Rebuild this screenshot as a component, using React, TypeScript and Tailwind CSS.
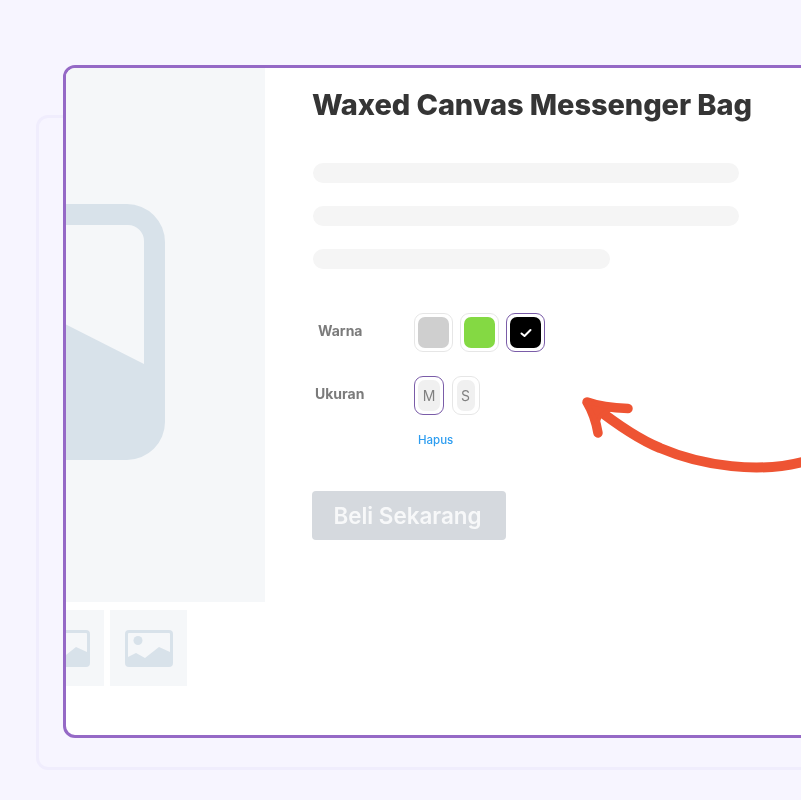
const colors = [
  { bg: 'bg-[#cfcfcf]', selected: false },
  { bg: 'bg-[#84d943]', selected: false },
  { bg: 'bg-black', selected: true },
];

function PictureIcon() {
  return (
    <svg width="48" height="37" viewBox="0 0 48 37" className="shrink-0">
      <path
        fillRule="evenodd"
        fill="#d8e2ea"
        d="M4 0h40a4 4 0 0 1 4 4v29a4 4 0 0 1-4 4H4a4 4 0 0 1-4-4V4a4 4 0 0 1 4-4Zm0 3a1 1 0 0 0-1 1v23l8-4 9 5 14-11 11 5V4a1 1 0 0 0-1-1H4Z"
      />
      <circle cx="13" cy="10.5" r="4.5" fill="#d8e2ea" />
    </svg>
  );
}

export default function App() {
  return (
    <div className="relative h-[800px] w-[801px] overflow-hidden bg-[#f7f5ff] pl-[63px] pt-[65px] font-['Inter',sans-serif]">
      <div className="absolute left-[36px] top-[115px] h-[655px] w-[800px] rounded-[12px] border-[3px] border-[#f0edfd]" />

      <div className="relative flex h-[673px] w-[800px] overflow-hidden rounded-[12px] border-[3px] border-[#9569c6] bg-white">
        <div className="flex w-[199px] shrink-0 flex-col">
          <div className="h-[534px] bg-[#f5f7f9] blur-[0.3px]">
            <svg width="199" height="534" viewBox="1 1 199 534">
              <path
                fillRule="evenodd"
                fill="#d8e2ea"
                d="M0 137H62a38 38 0 0 1 38 38V355a38 38 0 0 1-38 38H0V257L79 297V174a16 16 0 0 0-16-16H0Z"
              />
            </svg>
          </div>
          <div className="relative mt-2 flex h-[76px] gap-[6px] blur-[0.3px]">
            <div className="ml-[-39px] flex h-[76px] w-[77px] items-center justify-center bg-[#f5f7f9]">
              <PictureIcon />
            </div>
            <div className="flex h-[76px] w-[77px] items-center justify-center bg-[#f5f7f9]">
              <PictureIcon />
            </div>
          </div>
        </div>

        <div className="flex flex-col pl-[47px]">
          <h1 className="mt-[18px] h-[38px] text-[29px] font-extrabold leading-[38px] tracking-[-0.09px] whitespace-nowrap text-[#353535] blur-[0.5px]">
            Waxed Canvas Messenger Bag
          </h1>

          <div className="ml-px mt-[39px] flex flex-col gap-[23px]">
            <div className="h-5 w-[426px] rounded-full bg-[#f5f5f5]" />
            <div className="h-5 w-[426px] rounded-full bg-[#f5f5f5]" />
            <div className="h-5 w-[297px] rounded-full bg-[#f5f5f5]" />
          </div>

          <div className="mt-[44px] flex items-center blur-[0.3px]">
            <span className="mb-[5px] ml-[6px] w-[96px] text-[14px] font-bold text-[#7b7b7b]">Warna</span>
            <div className="flex gap-[7px]">
              {colors.map((color) => (
                <div
                  key={color.bg}
                  className={`flex h-[39px] w-[39px] items-center justify-center rounded-[9px] border ${color.selected ? 'border-[#7a5ca8]' : 'border-[#e6e6e6]'}`}
                >
                  <div className={`flex h-[31px] w-[31px] items-center justify-center rounded-[7px] ${color.bg}`}>
                    {color.selected && (
                      <svg width="12" height="10" viewBox="0 0 12 10" fill="none" stroke="#fff" strokeWidth="2" strokeLinecap="round" strokeLinejoin="round">
                        <path d="M1.5 5.5 4.5 8 10.5 2" />
                      </svg>
                    )}
                  </div>
                </div>
              ))}
            </div>
          </div>

          <div className="mt-[24px] flex items-center blur-[0.3px]">
            <span className="mb-[5px] ml-[3px] w-[99px] text-[14px] font-bold text-[#7b7b7b]">Ukuran</span>
            <div className="flex gap-[8px]">
              <div className="flex h-[39px] w-[30px] items-center justify-center rounded-[9px] border border-[#7a5ca8]">
                <div className="flex h-[31px] w-[22px] items-center justify-center rounded-[7px] bg-[#f0f0f0] text-[14px] text-[#808080]">M</div>
              </div>
              <div className="flex h-[39px] w-[28px] items-center justify-center rounded-[9px] border border-[#e6e6e6] pr-px">
                <div className="flex h-[31px] w-[18px] items-center justify-center rounded-[7px] bg-[#f0f0f0] text-[14px] text-[#808080]">S</div>
              </div>
            </div>
          </div>

          <span className="ml-[106px] mt-[17px] text-[11.5px] font-medium leading-[16px] text-[#2d9df0] blur-[0.3px]">Hapus</span>

          <button className="mt-[43px] h-[49px] w-[194px] rounded-[4px] bg-[#d5d9de] pr-[3px] text-[22.4px] font-semibold text-[#f7f8f9] blur-[0.3px]">
            Beli Sekarang
          </button>
        </div>
      </div>

      <svg className="absolute left-0 top-0" width="801" height="800" viewBox="0 0 801 800" fill="none" stroke="#ee5433" strokeLinecap="round" strokeLinejoin="round">
        <path d="M806 461C760 474 702 466 660 448C640 440 615 423 592 405" strokeWidth="10" strokeLinecap="butt" />
        <path d="M628 408.500C610 408 598 406 587 402C593 412 596 421 598 433" strokeWidth="9.500" />
        <path d="M587 402L612 408L600 416L597 424Z" fill="#ee5433" strokeWidth="4" />
      </svg>
    </div>
  );
}
